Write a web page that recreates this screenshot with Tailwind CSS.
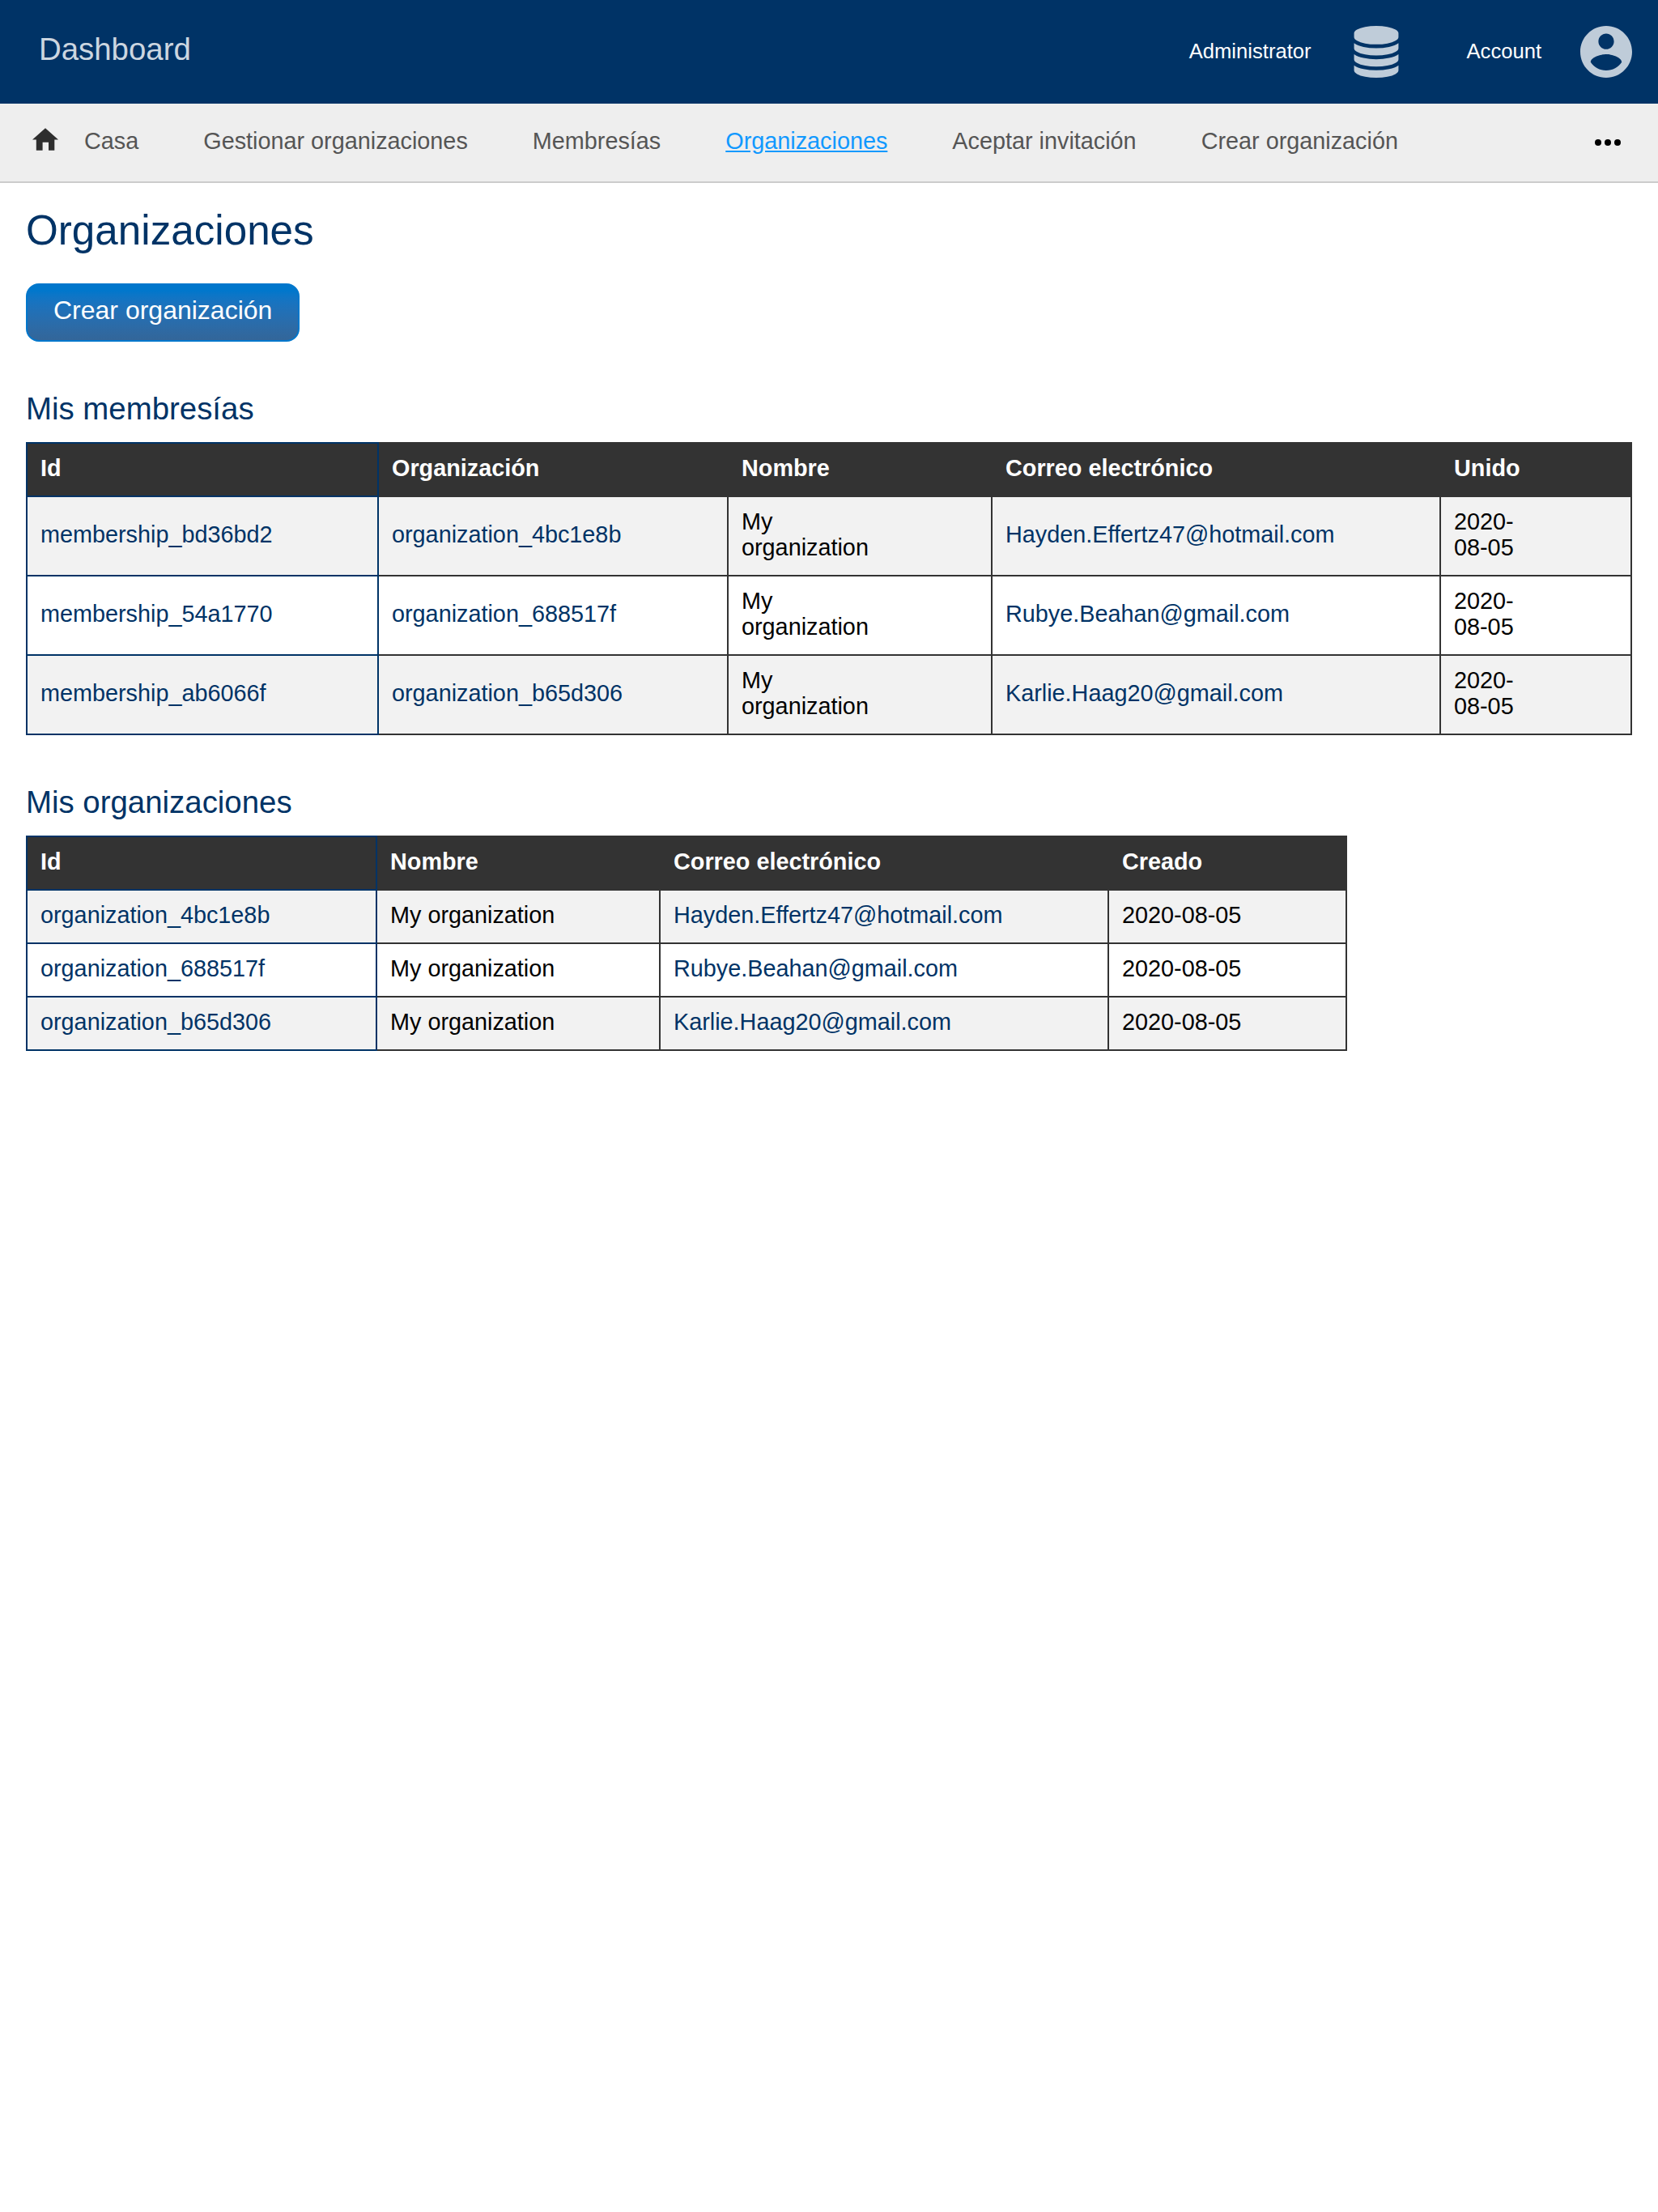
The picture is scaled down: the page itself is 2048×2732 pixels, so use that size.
<!DOCTYPE html>
<html lang="es">
<head>
<meta charset="utf-8">
<title>Organizaciones</title>
<script src="https://cdn.jsdelivr.net/npm/@tailwindcss/browser@4"></script>
</head>
<body class="min-h-screen bg-white font-['Liberation_Sans',Arial,sans-serif] text-black">
<header class="flex h-32 items-center bg-[#003366] pr-8 pl-12 text-[25.6px] leading-8 text-white">
  <h1 class="mr-auto pb-1.5 text-[38.4px] leading-[44px] text-[#ccd6e0]">Dashboard</h1>
  <a class="mr-20 flex items-center gap-12">
    <span class="pb-0.5">Administrator</span>
    <svg class="h-16 w-16 text-[#bfccd9]" viewBox="-128 0 1792 1792" fill="currentColor"><path d="M768 768q237 0 443-43t325-127v170q0 69-103 128t-280 93.500-385 34.500-385-34.500-280-93.500-103-128v-170q119 84 325 127t443 43zm0 768q237 0 443-43t325-127v170q0 69-103 128t-280 93.500-385 34.500-385-34.500-280-93.500-103-128v-170q119 84 325 127t443 43zm0-384q237 0 443-43t325-127v170q0 69-103 128t-280 93.500-385 34.500-385-34.500-280-93.500-103-128v-170q119 84 325 127t443 43zm0-1152q208 0 385 34.500t280 93.500 103 128v128q0 69-103 128t-280 93.500-385 34.500-385-34.500-280-93.500-103-128v-128q0-69 103-128t280-93.500 385-34.500z"/></svg>
  </a>
  <a class="flex items-center gap-12">
    <span class="pb-0.5">Account</span>
    <svg class="h-16 w-16 text-[#bfccd9]" viewBox="2 2 20 20" fill="currentColor"><path d="M12 2C6.48 2 2 6.48 2 12s4.480 10 10 10 10-4.480 10-10S17.520 2 12 2zm0 3c1.660 0 3 1.340 3 3s-1.340 3-3 3-3-1.340-3-3 1.340-3 3-3zm0 14.200c-2.500 0-4.710-1.280-6-3.220.030-1.990 4-3.080 6-3.080 1.990 0 5.970 1.090 6 3.080-1.290 1.940-3.500 3.220-6 3.220z"/></svg>
  </a>
</header>
<nav class="flex h-[98px] items-center border-b-2 border-[#cccccc] bg-[#eeeeee] pr-[46px] pl-10 text-[28.8px] leading-8 text-[#555555]">
  <svg class="mr-8 mb-2 h-8 w-8 text-[#2e2e2e]" viewBox="0 0 32 32" fill="currentColor"><path d="M16 2.300 32 16.500H27.300V29.800H20V19.800H12.600V29.800H4.800V16.500H0Z"/></svg>
  <div class="flex gap-20 pb-1">
    <a>Casa</a>
    <a>Gestionar organizaciones</a>
    <a>Membresías</a>
    <a class="text-[#1199ff] underline">Organizaciones</a>
    <a>Aceptar invitación</a>
    <a>Crear organización</a>
  </div>
  <svg class="ml-auto h-8 w-8 text-black" viewBox="0 0 32 32" fill="currentColor"><circle cx="4" cy="16" r="4"/><circle cx="16" cy="16" r="4"/><circle cx="28" cy="16" r="4"/></svg>
</nav>
<main class="px-8 pt-[29px] text-[28.8px] leading-8">
  <h2 class="text-[51.2px] leading-[60px] text-[#003366]">Organizaciones</h2>
  <button class="mt-[35px] block h-[72px] rounded-2xl border-2 border-[#0077cc] bg-linear-to-b from-[#0077cc] from-10% to-[#336699] px-8 pb-1.5 text-[32px] leading-9 text-white">Crear organización</button>

  <h3 class="mt-[61px] text-[38.4px] leading-[44px] text-[#003366]">Mis membresías</h3>
  <table class="mt-[19px] w-[1984px] table-fixed border-collapse text-left [&_td]:border-2 [&_td]:border-[#333333] [&_td]:px-4 [&_td]:pt-3.5 [&_td]:pb-[18px] [&_th]:border-2 [&_th]:border-[#333333] [&_th]:px-4 [&_th]:pt-3.5 [&_th]:pb-[18px] [&_tr>*:first-child]:border-[#003366] [&_a]:text-[#003366]">
    <colgroup><col class="w-[434px]"><col class="w-[432px]"><col class="w-[326px]"><col class="w-[554px]"><col class="w-[236px]"></colgroup>
    <thead class="bg-[#333333] text-white"><tr><th>Id</th><th>Organización</th><th>Nombre</th><th>Correo electrónico</th><th>Unido</th></tr></thead>
    <tbody>
      <tr class="bg-[#f2f2f2]"><td><a>membership_bd36bd2</a></td><td><a>organization_4bc1e8b</a></td><td>My<br>organization</td><td><a>Hayden.Effertz47@hotmail.com</a></td><td>2020-<br>08-05</td></tr>
      <tr><td><a>membership_54a1770</a></td><td><a>organization_688517f</a></td><td>My<br>organization</td><td><a>Rubye.Beahan@gmail.com</a></td><td>2020-<br>08-05</td></tr>
      <tr class="bg-[#f2f2f2]"><td><a>membership_ab6066f</a></td><td><a>organization_b65d306</a></td><td>My<br>organization</td><td><a>Karlie.Haag20@gmail.com</a></td><td>2020-<br>08-05</td></tr>
    </tbody>
  </table>

  <h3 class="mt-[61px] text-[38.4px] leading-[44px] text-[#003366]">Mis organizaciones</h3>
  <table class="mt-[19px] w-[1632px] table-fixed border-collapse text-left [&_td]:border-2 [&_td]:border-[#333333] [&_td]:px-4 [&_td]:pt-3.5 [&_td]:pb-[18px] [&_th]:border-2 [&_th]:border-[#333333] [&_th]:px-4 [&_th]:pt-3.5 [&_th]:pb-[18px] [&_tr>*:first-child]:border-[#003366] [&_a]:text-[#003366]">
    <colgroup><col class="w-[432px]"><col class="w-[350px]"><col class="w-[554px]"><col class="w-[294px]"></colgroup>
    <thead class="bg-[#333333] text-white"><tr><th>Id</th><th>Nombre</th><th>Correo electrónico</th><th>Creado</th></tr></thead>
    <tbody>
      <tr class="bg-[#f2f2f2]"><td><a>organization_4bc1e8b</a></td><td>My organization</td><td><a>Hayden.Effertz47@hotmail.com</a></td><td>2020-08-05</td></tr>
      <tr><td><a>organization_688517f</a></td><td>My organization</td><td><a>Rubye.Beahan@gmail.com</a></td><td>2020-08-05</td></tr>
      <tr class="bg-[#f2f2f2]"><td><a>organization_b65d306</a></td><td>My organization</td><td><a>Karlie.Haag20@gmail.com</a></td><td>2020-08-05</td></tr>
    </tbody>
  </table>
</main>
</body>
</html>
